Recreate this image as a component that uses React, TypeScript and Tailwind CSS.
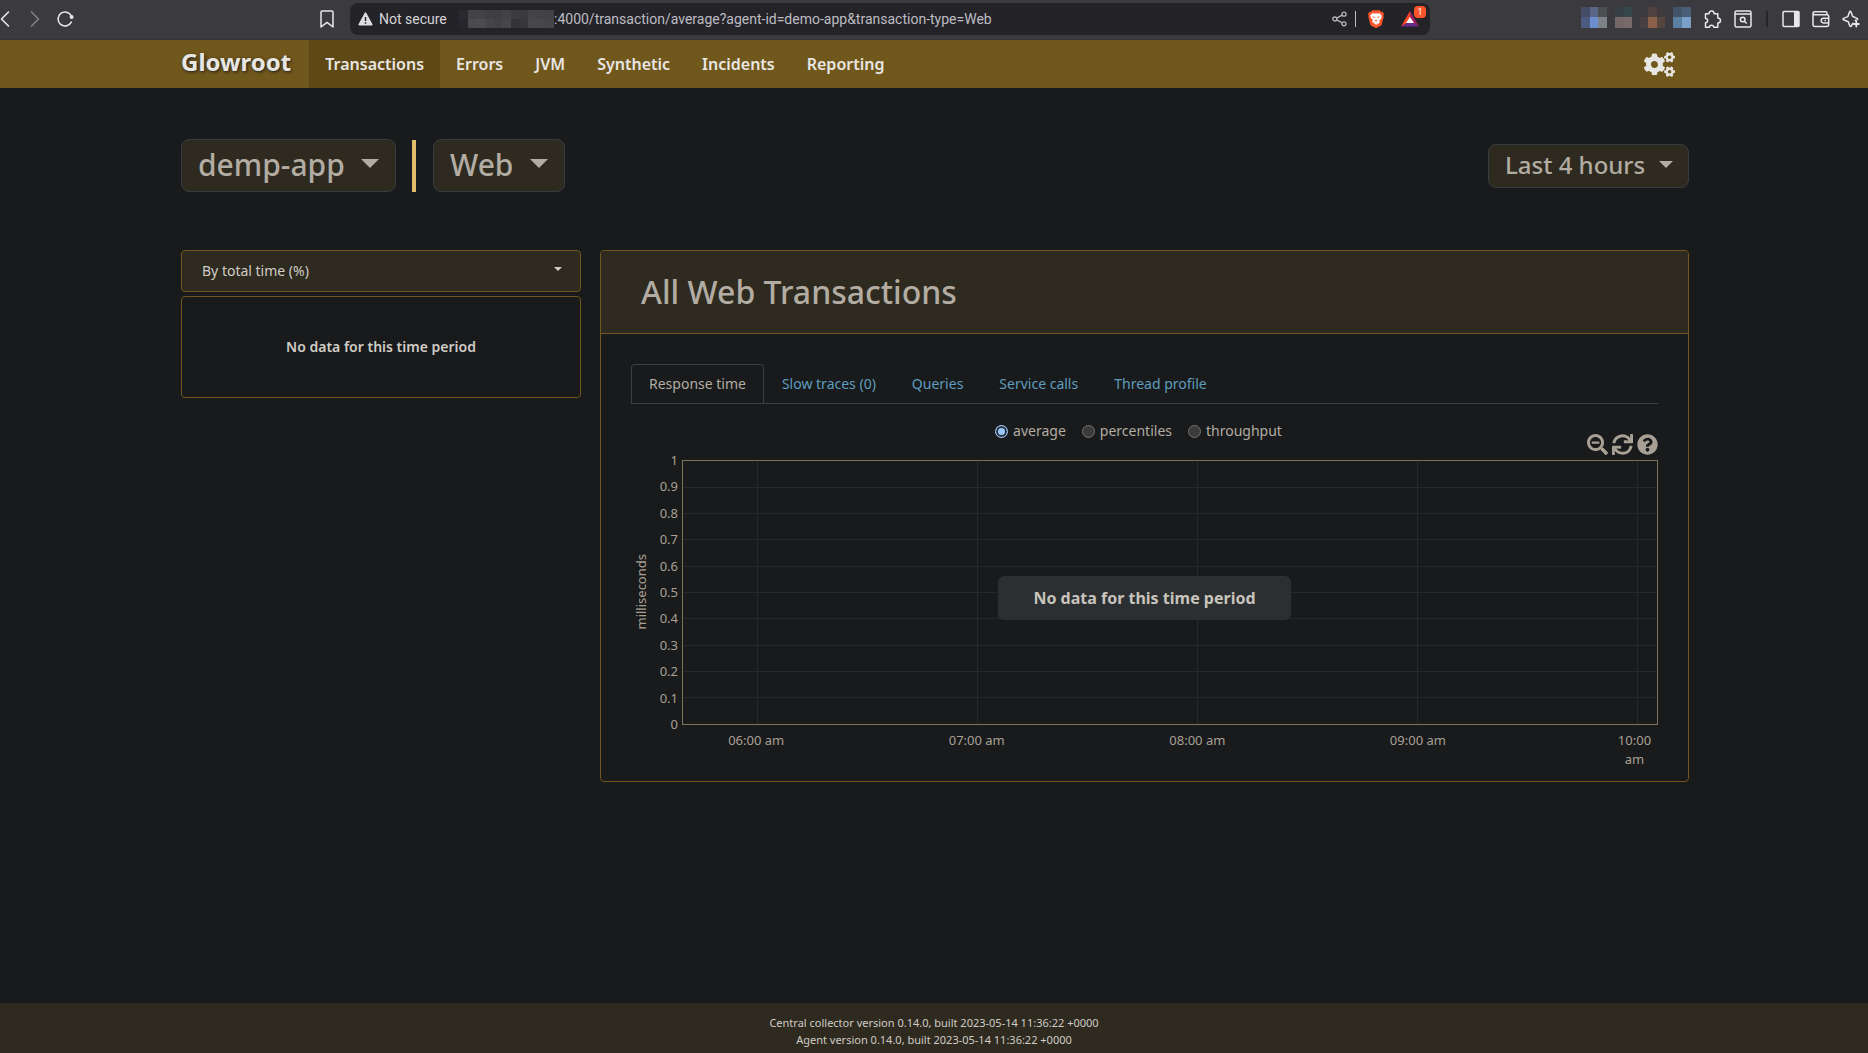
import React, { useState } from 'react';
import { FaCogs, FaSearchMinus, FaSync, FaQuestionCircle } from 'react-icons/fa';

const NAV_ITEMS = ['Transactions', 'Errors', 'JVM', 'Synthetic', 'Incidents', 'Reporting'];
const TABS = ['Response time', 'Slow traces (0)', 'Queries', 'Service calls', 'Thread profile'];
const MODES = ['average', 'percentiles', 'throughput'];

// Mosaic over private parts of the toolbar
const HOST_TOP = ['#29292f', '#434347', '#434347', '#3f3f43', '#3d3d42', '#434347', '#3b3b40', '#3a3a3f', '#444448', '#434347', '#414145'];
const HOST_BOTTOM = ['#26262c', '#4a4a4e', '#4c4c50', '#454549', '#414146', '#47474b', '#333338', '#36363b', '#48484c', '#48484c', '#454549'];

const Mosaic: React.FC<{ rows: string[][]; className: string }> = ({ rows, className }) => (
  <div className={`flex flex-col flex-shrink-0 ${className}`}>
    {rows.map((row, i) => (
      <div key={i} className="flex flex-1">
        {row.map((color, j) => (
          <div key={j} className="flex-1" style={{ backgroundColor: color }} />
        ))}
      </div>
    ))}
  </div>
);

// 1. Browser toolbar
const iconButton = 'flex-shrink-0 block';

const BrowserBar: React.FC = () => (
  <div className="h-10 bg-[#3b3a3f] border-b border-[#35343b] flex items-center text-[#e8e8ea] pb-1 pt-[3px] pr-2">
    <div className="flex items-center w-[350px] flex-shrink-0">
      <button aria-label="Back" className={iconButton}>
        <svg width="10" height="18" viewBox="0 0 10 18" fill="none" stroke="currentColor" strokeWidth="1.6" strokeLinecap="round" strokeLinejoin="round">
          <path d="M8.5 2 1.5 9l7 7" />
        </svg>
      </button>
      <button aria-label="Forward" className={`${iconButton} ml-5 text-[#828187]`}>
        <svg width="10" height="18" viewBox="0 0 10 18" fill="none" stroke="currentColor" strokeWidth="1.6" strokeLinecap="round" strokeLinejoin="round">
          <path d="M1.5 2l7 7-7 7" />
        </svg>
      </button>
      <button aria-label="Reload" className={`${iconButton} ml-4`}>
        <svg width="18" height="18" viewBox="0 0 18 18" fill="none" stroke="currentColor" strokeWidth="1.6" strokeLinecap="round">
          <path d="M15.3 12.2A7 7 0 1 1 15.4 6" />
          <circle cx="15.6" cy="7" r="2" fill="currentColor" stroke="none" />
        </svg>
      </button>
      <button aria-label="Bookmark" className={`${iconButton} ml-auto mr-4`}>
        <svg width="14" height="18" viewBox="0 0 14 18" fill="none" stroke="currentColor" strokeWidth="1.5" strokeLinejoin="round">
          <path d="M1 2.2Q1 1 2.2 1h9.6Q13 1 13 2.2V17l-6-4.6L1 17z" />
        </svg>
      </button>
    </div>
    <div className="h-8 w-[1080px] min-w-0 bg-[#242328] rounded-lg flex items-center pl-2 pr-2.5 text-[14px] font-['Roboto',sans-serif]">
      <svg width="15" height="14" viewBox="0 0 15 14" className="flex-shrink-0">
        <path d="M7.5 1.2 13.8 12.6H1.2z" fill="#dedee0" stroke="#dedee0" strokeWidth="1.6" strokeLinejoin="round" />
        <path d="M7.5 5v4M7.5 10.2v1.5" stroke="#242328" strokeWidth="1.5" />
      </svg>
      <span className="ml-1.5 w-[80px] flex-shrink-0 whitespace-nowrap text-[#d4d4d7]">Not secure</span>
      <Mosaic rows={[HOST_TOP, HOST_BOTTOM]} className="w-[95px] h-[18px]" />
      <span className="whitespace-nowrap text-[#bdbcc2]">:4000/transaction/average?agent-id=demo-app&amp;transaction-type=Web</span>
      <div className="ml-auto flex items-center">
        <button aria-label="Share" className={iconButton}>
          <svg width="15" height="16" viewBox="0 0 15 16" fill="none" stroke="#b6b5ba" strokeWidth="1.3">
            <circle cx="2.8" cy="8" r="2" />
            <circle cx="12" cy="3.2" r="2" />
            <circle cx="12" cy="12.8" r="2" />
            <path d="M4.6 7.1 10.2 4.1M4.6 8.9l5.6 3" />
          </svg>
        </button>
        <div className="w-px h-4 bg-[#bdbcc2] mx-2" />
        <button aria-label="Brave Shields" className={`${iconButton} ml-1`}>
          <svg width="16" height="18" viewBox="0 0 16 18">
            <path d="M4.300.2h7.400L13.300 2l1.300-.2L16 4l-.6 1.600.3 1.400-2 7.300q-.2.900-1 1.500L8.800 17.800q-.8.400-1.600 0L3.300 15.800q-.8-.600-1-1.500L.3 7l.3-1.400L0 4l1.400-2.200L2.700 2z" fill="#fb542b" />
            <path d="M4.200 3.200 6.500 3.600 8 3.200l1.500.4 2.300-.4 2 2.700-.5 1.300.2.900-2.400 2.900.7 1.500-1.200 1.300-1.500-.900.9 1.200L8 14.800 6 13.200l.9-1.200-1.500.9L4.200 11.600l.7-1.500L2.500 7.200l.2-.9-.5-.7z" fill="#fff" />
            <path d="M3.800 6.300l3 .8-.5 1.200zM12.200 6.300l-3 .8.500 1.200zM6.500 10.600 8 11.400l1.500-.8-.8-.6H7.300z" fill="#fb542b" />
          </svg>
        </button>
        <button aria-label="Brave Rewards, 1 new" className={`${iconButton} relative ml-4`}>
          <svg width="20" height="18" viewBox="0 0 20 18">
            <path d="M10 1 1 16.500 7 13l3-5z" fill="#ff4724" />
            <path d="M1 16.500h18L13 13H7z" fill="#662d91" />
            <path d="M10 1l9 15.500L13 13l-3-5z" fill="#9e1f63" />
            <path d="M10 7l4 6H6z" fill="#fff" />
          </svg>
          <span className="absolute -top-1 -right-1.5 w-3 h-3 rounded bg-[#fb542b] text-white text-[9px] leading-3 text-center">1</span>
        </button>
      </div>
    </div>
    <div className="ml-auto flex items-center flex-shrink-0">
      <Mosaic rows={[['#454d66', '#5b6588', '#4d4e50'], ['#4a5a80', '#6a8ed0', '#7d8286']]} className="w-[26px] h-[21px] mb-1" />
      <Mosaic rows={[['#364147', '#38474c'], ['#736767', '#786a6b']]} className="w-[17px] h-[21px] ml-2 mb-1" />
      <Mosaic rows={[['#3b3a3f', '#50423f', '#403c3e'], ['#473f42', '#8a6048', '#54463f']]} className="w-[25px] h-[21px] ml-2 mb-1" />
      <Mosaic rows={[['#435468', '#4a5f77'], ['#5b7ea3', '#7a9fc8']]} className="w-[18px] h-[21px] ml-2 mb-1" />
      <button aria-label="Extensions" className={`${iconButton} ml-3`}>
        <svg width="19" height="19" viewBox="0 0 19 19" fill="none" stroke="currentColor" strokeWidth="1.5" strokeLinejoin="round">
          <path d="M2.500 3.800H6c0-3.700 5.200-3.700 5.200 0h3.600v4.100c3.600.2 3.600 4.900 0 5.100v4.200h-4c-.1-2.700-4.300-2.700-4.400 0H2.500v-4.500c2.800-.1 2.800-4.200 0-4.300z" />
        </svg>
      </button>
      <button aria-label="Search tabs" className={`${iconButton} ml-3`}>
        <svg width="18" height="18" viewBox="0 0 18 18" fill="none" stroke="currentColor" strokeWidth="1.5">
          <rect x="1" y="1" width="16" height="16" rx="1.5" />
          <path d="M1 4h16" />
          <circle cx="8.700" cy="9.500" r="2.300" />
          <path d="M10.400 11.300 12.600 13.600" />
        </svg>
      </button>
      <div className="w-0.5 h-4 bg-[#26252a] ml-3.5" />
      <button aria-label="Side panel" className={`${iconButton} ml-3.5`}>
        <svg width="18" height="18" viewBox="0 0 18 18" fill="none" stroke="currentColor" strokeWidth="1.5">
          <rect x="1" y="1.500" width="16" height="15" rx="1" />
          <path d="M12 1.500h5v15h-5z" fill="currentColor" stroke="none" />
        </svg>
      </button>
      <button aria-label="Wallet" className={`${iconButton} ml-3`}>
        <svg width="18" height="18" viewBox="0 0 18 18" fill="none" stroke="currentColor" strokeWidth="1.500" strokeLinejoin="round">
          <path d="M15 4.500V3q0-1.200-1.200-1.200H2.800Q1 1.800 1 3.200V14.500Q1 16.500 3 16.500H14.500Q16.700 16.500 16.700 14.500V6.500Q16.700 4.700 15 4.700H2.800Q1 4.700 1 3.200" />
          <path d="M16.700 8.300h-5.200a2.300 2.300 0 0 0 0 4.600h5.200M12.500 10.600h1.500" />
        </svg>
      </button>
      <button aria-label="Leo AI" className={`${iconButton} ml-3`}>
        <svg width="18" height="18" viewBox="0 0 18 18" fill="none" stroke="currentColor" strokeWidth="1.500" strokeLinejoin="round" strokeLinecap="round">
          <path d="M11 13.200 9.600 15.500Q8.300 17.500 7.500 15.200L6.300 11.700 2 10Q-.2 9 2 8.100L5.900 6.600 7.400 2.200Q8.200.200 9.100 2.200L10.700 6.500 14.700 8.100Q16.800 9 14.700 9.900L13.200 10.500" />
          <path d="M14.300 11.500v5M11.800 14h5" strokeWidth="1.800" />
        </svg>
      </button>
    </div>
  </div>
);

// 2. Main navigation
const NavBar: React.FC = () => (
  <nav className="bg-[#70571b] h-12 pl-[181px] pr-[178px] flex items-stretch text-[#e8e6e3] flex-shrink-0">
    <a href="#" className="text-[24px] leading-[44px] font-bold mr-[18px] [text-shadow:1px_1px_3px_#181a1b]">
      Glowroot
    </a>
    {NAV_ITEMS.map((item, idx) => (
      <a
        key={item}
        href="#"
        className={`px-4 text-[16px] leading-[48px] font-semibold ${idx === 0 ? 'bg-[#5d4816]' : ''}`}
      >
        {item}
      </a>
    ))}
    <button aria-label="Configuration" className="ml-auto mr-3.5 px-px">
      <FaCogs className="w-[31px] h-[25px]" />
    </button>
  </nav>
);

// 3. Drop-downs of the page header
const Caret: React.FC<{ className: string }> = ({ className }) => (
  <svg viewBox="0 0 18 9" preserveAspectRatio="none" className={`absolute pointer-events-none ${className}`} fill="currentColor">
    <path d="M0 0h18L9 9z" />
  </svg>
);

interface PickerProps {
  label: string;
  value: string;
  size: 'lg' | 'md';
}

const Picker: React.FC<PickerProps> = ({ label, value, size }) => (
  <div className="relative text-[#b2aca2]">
    <select
      aria-label={label}
      className={`appearance-none block font-medium bg-[#2e2a20] border border-[#373c3e] rounded-lg pl-4 pb-0.5 ${size === 'lg' ? 'h-[53px] text-[30px] pr-[50px]' : 'h-11 text-[24px] pr-[42px]'}`}
    >
      <option>{value}</option>
    </select>
    <Caret className={size === 'lg' ? 'w-[18px] h-[9px] right-[17px] top-5' : 'w-3.5 h-[7px] right-4 top-[17px]'} />
  </div>
);

// 4. Sidebar
const Sidebar: React.FC = () => (
  <aside className="w-[400px] flex-shrink-0">
    <div className="relative text-[#d0ccc6]">
      <select
        aria-label="Sort transactions"
        className="appearance-none block w-full h-[42px] bg-[#2e2a20] border border-[#70571b] rounded px-5 pb-0.5 text-[14px]"
      >
        <option>By total time (%)</option>
      </select>
      <Caret className="w-2 h-1 right-[19px] top-[17px]" />
    </div>
    <div className="mt-1 h-[102px] border border-[#70571b] rounded pb-0.5 flex items-center justify-center text-[14px] font-semibold text-[#d0ccc6]">
      No data for this time period
    </div>
  </aside>
);

// 5. Chart
const Y_TICKS = ['1', '0.9', '0.8', '0.7', '0.6', '0.5', '0.4', '0.3', '0.2', '0.1', '0'];
const X_TICKS = [
  { at: 7.6, label: '06:00 am' },
  { at: 30.2, label: '07:00 am' },
  { at: 52.8, label: '08:00 am' },
  { at: 75.4, label: '09:00 am' },
  { at: 98, label: '10:00 am' }
];

const Chart: React.FC = () => (
  <div className="flex text-[13px] leading-5 text-[#a8a095]">
    <div className="h-[264px] w-5 flex items-center justify-center">
      <span className="[writing-mode:vertical-rl] rotate-180">milliseconds</span>
    </div>
    <div className="w-[27px] mr-1 -my-2.5 h-[284px] flex flex-col justify-between text-right">
      {Y_TICKS.map(tick => (
        <span key={tick}>{tick}</span>
      ))}
    </div>
    <div className="flex-1 min-w-0">
      <div className="relative h-[265px] border border-[#7d735b]">
        <svg className="block w-full h-full" stroke="#262829" shapeRendering="crispEdges">
          {Y_TICKS.slice(1, -1).map((tick, i) => (
            <line key={tick} x1="0" x2="100%" y1={`${(i + 1) * 10}%`} y2={`${(i + 1) * 10}%`} />
          ))}
          {X_TICKS.map(tick => (
            <line key={tick.label} x1={`${tick.at}%`} x2={`${tick.at}%`} y1="0" y2="100%" />
          ))}
        </svg>
        <div className="absolute inset-0 pt-2.5 pr-[51px] flex items-center justify-center">
          <div className="w-[293px] h-11 rounded-md bg-[#2b2f31] text-[#c8c3bc] text-[16px] font-bold flex items-center justify-center">
            No data for this time period
          </div>
        </div>
      </div>
      {/* Time labels */}
      <div className="relative h-14">
        {X_TICKS.map((tick, i) => {
          const last = i === X_TICKS.length - 1;
          return (
            <span
              key={tick.label}
              className={`absolute top-1.5 -translate-x-1/2 text-center leading-[19px] ${last ? 'w-10 -ml-1' : 'whitespace-nowrap'}`}
              style={{ left: `${tick.at}%` }}
            >
              {tick.label}
            </span>
          );
        })}
      </div>
    </div>
  </div>
);

const TransactionsPanel: React.FC = () => {
  const [mode, setMode] = useState('average');

  return (
    <section className="flex-1 min-w-0 border border-[#70571b] rounded">
      <div className="h-[83px] bg-[#2e2a20] border-b border-[#70571b] rounded-t px-10 flex items-center">
        <h2 className="text-[32px] font-medium text-[#b2aca2]">All Web Transactions</h2>
      </div>
      <div className="px-[30px] pt-[30px]">
        <div className="flex border-b border-[#3b4042] text-[14px] leading-[38px]">
          {TABS.map((tab, idx) => (
            <a
              key={tab}
              href="#"
              className={`px-[17px] border border-b-0 rounded-t ${idx === 0 ? 'border-[#3b4042] text-[#b2aca2]' : 'border-transparent text-[#5f9dbf]'}`}
            >
              {tab}
            </a>
          ))}
        </div>
        <div className="mt-4 pr-3 flex justify-center gap-4 text-[14px] leading-[22px] text-[#b2aca2]">
          {MODES.map(m => (
            <label key={m} className="flex items-center gap-[5px]">
              <input
                type="radio"
                name="mode"
                value={m}
                checked={mode === m}
                onChange={() => setMode(m)}
                className="appearance-none w-[13px] h-[13px] rounded-full border border-[#76736e] bg-[#3b3b3b] checked:border-[#99c8ff] checked:bg-[#99c8ff] checked:shadow-[inset_0_0_0_2px_#2b2f36]"
              />
              {m}
            </label>
          ))}
        </div>
        <div className="-mt-2 mb-[5px] flex justify-end gap-1 text-[#a8a095]">
          <button aria-label="Zoom out"><FaSearchMinus size={21} /></button>
          <button aria-label="Refresh"><FaSync size={21} /></button>
          <button aria-label="Help"><FaQuestionCircle size={21} /></button>
        </div>
        <Chart />
      </div>
    </section>
  );
};

export default function App() {
  return (
    <div className="min-h-screen flex flex-col bg-[#181a1b] font-['Noto_Sans',sans-serif]">
      <BrowserBar />
      <NavBar />
      <main className="flex-1 pl-[181px] pr-[179px] pt-[51px]">
        <header className="flex items-center">
          <Picker label="Agent" value="demp-app" size="lg" />
          <div className="w-1 h-[52px] ml-4 mr-[17px] bg-[#e2bd6a]" />
          <Picker label="Transaction type" value="Web" size="lg" />
          <div className="ml-auto">
            <Picker label="Time range" value="Last 4 hours" size="md" />
          </div>
        </header>
        <div className="mt-[58px] flex items-start gap-[19px]">
          <Sidebar />
          <TransactionsPanel />
        </div>
      </main>
      <footer className="bg-[#2e2a20] text-[#d0ccc6] text-[11px] leading-[17px] text-center pt-[11px] pb-[5px]">
        <div>Central collector version 0.14.0, built 2023-05-14 11:36:22 +0000</div>
        <div>Agent version 0.14.0, built 2023-05-14 11:36:22 +0000</div>
      </footer>
    </div>
  );
}
